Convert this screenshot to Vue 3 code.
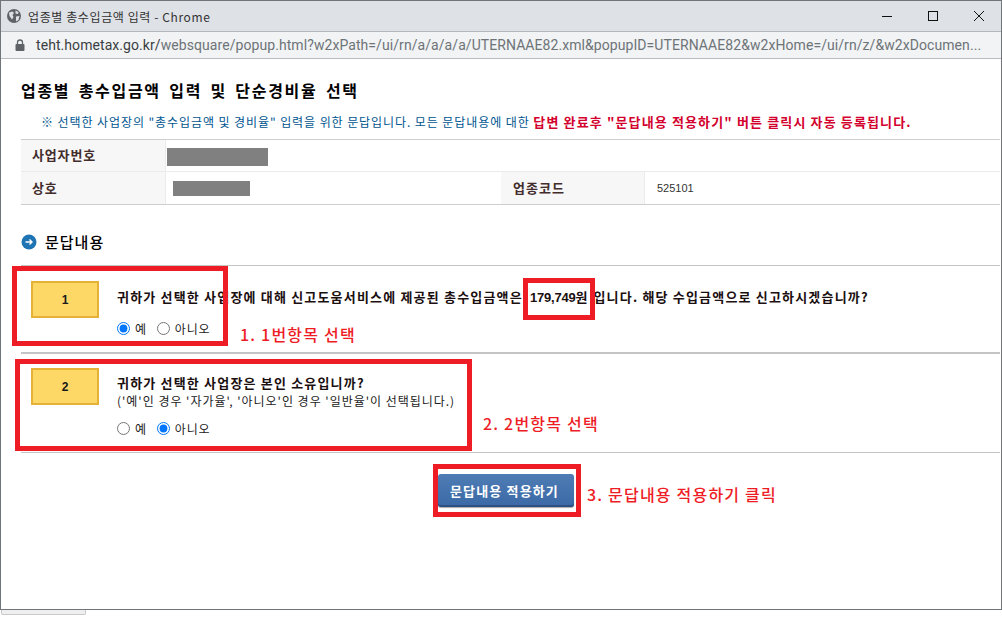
<script setup>
import { ref } from 'vue'

const answer1 = ref('yes')
const answer2 = ref('no')
const url = 'websquare/popup.html?w2xPath=/ui/rn/a/a/a/a/UTERNAAE82.xml&popupID=UTERNAAE82&w2xHome=/ui/rn/z/&w2xDocumen...'
</script>

<template>
  <div class="screen">
    <div class="window">
      <div class="titlebar">
        <svg class="globe" width="16" height="16" viewBox="0 0 16 16">
          <circle cx="8" cy="8" r="7" fill="#5f6368" />
          <path d="M3 4.500 6.500 3.500 8 5 6.500 7 7.500 9 6 11.500 3.500 8ZM9.500 2.500 12.500 4 12 6 9.500 5.500ZM10 8.500 13.500 8 12.500 12 10 13.500Z" fill="#dee1e6" />
        </svg>
        <span class="title">업종별 총수입금액 입력 - Chrome</span>
        <div class="controls">
          <svg width="12" height="12" viewBox="0 0 12 12"><path d="M1 6.500H11" stroke="#111" fill="none" /></svg>
          <svg width="12" height="12" viewBox="0 0 12 12"><rect x="1.500" y="1.500" width="9" height="9" stroke="#111" fill="none" /></svg>
          <svg width="12" height="12" viewBox="0 0 12 12"><path d="M1 1 11 11M11 1 1 11" stroke="#111" fill="none" /></svg>
        </div>
      </div>
      <div class="urlbar">
        <svg width="10" height="12" viewBox="0 0 10 12">
          <path d="M2.500 5V3.500a2.500 2.500 0 0 1 5 0V5" stroke="#5f6368" stroke-width="1.300" fill="none" />
          <rect x="0.500" y="5" width="9" height="7" rx="1" fill="#5f6368" />
        </svg>
        <span class="url"><b>teht.hometax.go.kr/</b>{{ url }}</span>
      </div>

      <div class="content">
        <h1>업종별 총수입금액 입력 및 단순경비율 선택</h1>
        <p class="note">
          ※ 선택한 사업장의 "총수입금액 및 경비율" 입력을 위한 문답입니다. 모든 문답내용에 대한
          <b>답변 완료후 "문답내용 적용하기" 버튼 클릭시 자동 등록됩니다.</b>
        </p>

        <div class="info">
          <div class="th">사업자번호</div>
          <div class="td wide"><span class="mask mask-a"></span></div>
          <div class="th">상호</div>
          <div class="td"><span class="mask mask-b"></span></div>
          <div class="th th-code">업종코드</div>
          <div class="td code">525101</div>
        </div>

        <h2>
          <svg width="16" height="16" viewBox="0 0 16 16">
            <circle cx="8" cy="8" r="7.500" fill="#1f74b4" />
            <path d="M4.500 8H11M8.500 5.500 11 8 8.500 10.500" stroke="#fff" stroke-width="1.400" fill="none" />
          </svg>
          문답내용
        </h2>

        <div class="question q1">
          <div class="num">1</div>
          <div class="body">
            <div class="text">귀하가 선택한 사업장에 대해 신고도움서비스에 제공된 총수입금액은 <span class="amount">179,749원</span> 입니다. 해당 수입금액으로 신고하시겠습니까?</div>
            <div class="radios">
              <label><input v-model="answer1" type="radio" value="yes" />예</label>
              <label><input v-model="answer1" type="radio" value="no" />아니오</label>
            </div>
          </div>
        </div>

        <div class="question q2">
          <div class="num">2</div>
          <div class="body">
            <div class="text">귀하가 선택한 사업장은 본인 소유입니까?</div>
            <div class="sub">('예'인 경우 '자가율', '아니오'인 경우 '일반율'이 선택됩니다.)</div>
            <div class="radios">
              <label><input v-model="answer2" type="radio" value="yes" />예</label>
              <label><input v-model="answer2" type="radio" value="no" />아니오</label>
            </div>
          </div>
        </div>

        <div class="actions">
          <button type="button">문답내용 적용하기</button>
        </div>
      </div>
    </div>
    <div class="behind"></div>

    <!-- annotations drawn over the page -->
    <div class="mark m1"></div>
    <div class="mark m2"></div>
    <div class="mark m3"></div>
    <div class="mark m4"></div>
    <div class="hint h1">1. 1번항목 선택</div>
    <div class="hint h2">2. 2번항목 선택</div>
    <div class="hint h3">3. 문답내용 적용하기 클릭</div>
  </div>
</template>

<style scoped>
.screen {
  position: relative;
  width: 1002px;
  height: 618px;
  overflow: hidden;
  background: #fff;
  font-family: "Noto Sans CJK KR", "Liberation Sans", sans-serif;
  color: #111;
}
.window {
  box-sizing: border-box;
  height: 610px;
  border: 1px solid #70757a;
  display: flex;
  flex-direction: column;
  background: #fff;
}
.titlebar {
  height: 30px;
  flex: none;
  display: flex;
  align-items: center;
  padding-left: 5px;
  background: #dee1e6;
  border-bottom: 1px solid #b4b7bb;
}
.title {
  margin-left: 6px;
  font-size: 12px;
  color: #333;
  letter-spacing: 0.6px;
}
.controls {
  margin-left: auto;
  display: flex;
  gap: 34px;
  padding-right: 16px;
}
.urlbar {
  height: 26px;
  flex: none;
  display: flex;
  align-items: center;
  padding-left: 14px;
  background: #f1f3f4;
  border-bottom: 1px solid #b9bbbe;
}
.url {
  margin-left: 11px;
  font-family: Roboto, sans-serif;
  font-size: 14px;
  letter-spacing: 0.07px;
  color: #6e7378;
  white-space: nowrap;
}
.url b {
  font-weight: 400;
  color: #3b3f43;
}
.content {
  padding: 0 0 0 20px;
  flex: 1;
}
h1 {
  margin: 20px 0 0;
  font-size: 16px;
  line-height: 22px;
  font-weight: 700;
  color: #000;
  letter-spacing: 1.7px;
  word-spacing: 3.1px;
}
.note {
  margin: 12px 0 0 20px;
  font-size: 12px;
  line-height: 18px;
  color: #00568f;
  letter-spacing: 0.92px;
  white-space: nowrap;
}
.note b {
  font-size: 13px;
  color: #d3002d;
  letter-spacing: 1.13px;
}
.info {
  margin-top: 8px;
  margin-right: 1px;
  display: grid;
  grid-template-columns: 145px 335px 144px 1fr;
  grid-auto-rows: 32px;
  border-top: 1px solid #cfcfcf;
  border-bottom: 1px solid #cfcfcf;
  font-size: 13px;
}
.th {
  display: flex;
  align-items: center;
  padding-left: 11px;
  padding-bottom: 2px;
  background: #f7f7f7;
  border-right: 1px solid #ebebeb;
  font-weight: 700;
  color: #432c2c;
  letter-spacing: 0.85px;
}
.th-code {
  padding-left: 12px;
  letter-spacing: 1px;
}
.td {
  display: flex;
  align-items: center;
  padding-left: 1px;
}
.td.wide {
  grid-column: 2 / 5;
  border-bottom: 1px solid #ebebeb;
}
.info .th:first-child {
  border-bottom: 1px solid #ebebeb;
}
.code {
  padding-left: 12px;
  font-family: "Liberation Sans", sans-serif;
  font-size: 11px;
  color: #333;
}
.mask {
  display: block;
  background: #808080;
}
.mask-a {
  width: 101px;
  height: 18px;
  margin-top: 2px;
}
.mask-b {
  width: 77px;
  height: 15px;
  margin-left: 6px;
}
h2 {
  margin: 27px 0 0;
  display: flex;
  align-items: center;
  gap: 8px;
  font-size: 15px;
  line-height: 20px;
  font-weight: 500;
  color: #000;
  letter-spacing: 1px;
}
.question {
  box-sizing: border-box;
  display: flex;
  border-top: 1px solid #c4c4c4;
  margin-right: 1px;
}
.q1 {
  margin-top: 13px;
  height: 87px;
  padding-top: 15px;
}
.q2 {
  height: 101px;
  padding-top: 14px;
  border-top-width: 2px;
  border-bottom: 1px solid #c4c4c4;
}
.num {
  box-sizing: border-box;
  width: 68px;
  height: 37px;
  margin-left: 10px;
  flex: none;
  display: flex;
  align-items: center;
  justify-content: center;
  background: #fdd867;
  border: 2px solid #e5b137;
  font-family: "Liberation Sans", sans-serif;
  font-size: 12px;
  font-weight: 700;
  color: #1a1a1a;
}
.body {
  margin-left: 18px;
  font-size: 12px;
  line-height: 17px;
}
.text {
  font-size: 13px;
  font-weight: 700;
  color: #1b0f10;
  letter-spacing: 1.18px;
  white-space: nowrap;
}
.q1 .text {
  margin-top: 7px;
}
.q2 .text {
  margin-top: 6px;
}
.amount {
  margin: 0 2px 0 3px;
  font-family: "Liberation Sans", "Noto Sans CJK KR", sans-serif;
  letter-spacing: -0.2px;
}
.sub {
  margin-top: 1px;
  letter-spacing: 0.98px;
  white-space: nowrap;
  color: #222;
}
.radios {
  display: flex;
  gap: 10px;
  margin-top: 11px;
}
.q1 .radios {
  margin-top: 14px;
}
.radios label {
  display: flex;
  align-items: center;
  gap: 5px;
  letter-spacing: 0.8px;
  color: #222;
}
.radios input {
  width: 13px;
  height: 13px;
  margin: 0;
  accent-color: #0075ff;
}
.actions {
  padding: 21px 0 0 417px;
}
button {
  display: block;
  width: 136px;
  height: 33px;
  padding: 0 3px 0 0;
  border: none;
  border-radius: 3px;
  background: linear-gradient(#4f7cb4, #3a69a6);
  box-shadow: inset 0 -2px 0 #2b4f80, 0 1px 1px #aaa;
  font-family: inherit;
  font-size: 13px;
  font-weight: 700;
  letter-spacing: 1.15px;
  color: #fff;
}
.behind {
  margin-left: 1px;
  width: 83px;
  height: 4px;
  background: #efefef;
  border: 1px solid #c8c8c8;
  border-top: none;
  border-radius: 0 0 2px 2px;
}
.mark {
  position: absolute;
  box-sizing: border-box;
  border: 5px solid #ee1c25;
}
.m1 {
  left: 12px;
  top: 266px;
  width: 216px;
  height: 80px;
}
.m2 {
  left: 523px;
  top: 278px;
  width: 72px;
  height: 42px;
}
.m3 {
  left: 15px;
  top: 359px;
  width: 457px;
  height: 92px;
}
.m4 {
  left: 433px;
  top: 464px;
  width: 148px;
  height: 53px;
}
.hint {
  position: absolute;
  font-size: 16px;
  line-height: 20px;
  font-weight: 500;
  color: #ee1c25;
  letter-spacing: 1.2px;
  white-space: nowrap;
}
.h1 {
  left: 240px;
  top: 324px;
}
.h2 {
  left: 483px;
  top: 413px;
}
.h3 {
  left: 587px;
  top: 484px;
}
</style>
